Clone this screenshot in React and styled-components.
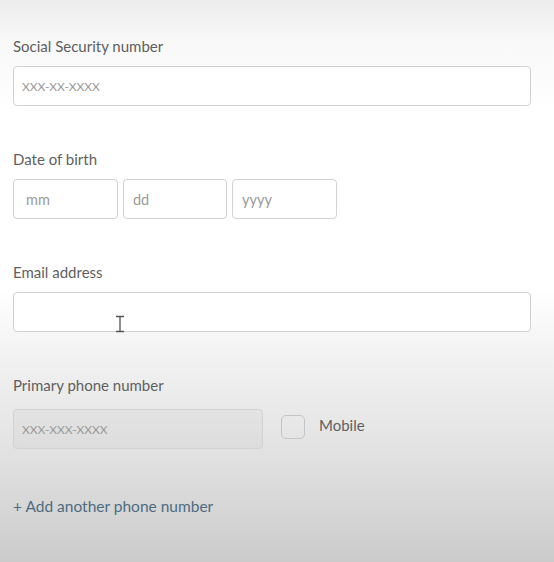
import React from "react";
import styled, { createGlobalStyle } from "styled-components";

const Global = createGlobalStyle`
  html, body { margin: 0; padding: 0; }
  body {
    width: 554px;
    height: 562px;
    overflow: hidden;
    font-family: Lato, "Open Sans", sans-serif;
    background: linear-gradient(180deg, #ececec 0px, #f8f8f8 40px, #ffffff 110px, #ffffff 290px, #f1f1f1 360px, #e6e6e6 430px, #d8d8d8 500px, #cbcbcb 562px);
  }
`;

const Page = styled.div`
  position: relative;
  display: flex;
  flex-direction: column;
  padding: 36px 0 0 13px;
  width: 554px;
  height: 562px;
  box-sizing: border-box;
`;

const Group = styled.div`
  display: flex;
  flex-direction: column;
  gap: ${(p) => p.$gap || 10}px;
  margin-bottom: ${(p) => p.$mb ?? 43}px;
`;

const Label = styled.div`
  font-size: 15px;
  line-height: 20px;
  color: #5f5f5f;
`;

const Field = styled.div`
  position: relative;
  box-sizing: border-box;
  width: ${(p) => p.$w}px;
  height: 40px;
  border: 1px solid #d2d2d2;
  border-radius: 4px;
  background: ${(p) => (p.$shade ? "rgba(0,0,0,0.025)" : "#ffffff")};
  display: flex;
  align-items: center;
  padding-left: ${(p) => p.$pl || 8}px;
  font-size: ${(p) => p.$fs || 14.5}px;
  color: #9a9a9a;
`;

const Row = styled.div`
  display: flex;
  align-items: center;
  gap: 5px;
`;

const Check = styled.div`
  box-sizing: border-box;
  width: 24px;
  height: 24px;
  border: 1px solid #c4c4c4;
  border-radius: 5px;
  margin-left: 13px;
  margin-top: -4px;
`;

const CheckText = styled.span`
  font-size: 15px;
  color: #5f5f5f;
  margin-left: 9px;
  margin-top: -8px;
`;

const AddLink = styled.a`
  font-size: 15.5px;
  line-height: 20px;
  color: #4e6c80;
  text-decoration: none;
  margin-top: 10px;
  align-self: flex-start;
`;

const Cursor = styled.svg`
  position: absolute;
  left: 100px;
  top: 22px;
`;

export default function App() {
  return (
    <>
      <Global />
      <Page>
        <Group>
          <Label>Social Security number</Label>
          <Field $w={518} $fs={12}>XXX-XX-XXXX</Field>
        </Group>
        <Group>
          <Label>Date of birth</Label>
          <Row>
            <Field $w={105} $pl={12}>mm</Field>
            <Field $w={104} $pl={9}>dd</Field>
            <Field $w={105} $pl={9}>yyyy</Field>
          </Row>
        </Group>
        <Group>
          <Label>Email address</Label>
          <Field $w={518}>
            <Cursor width="12" height="18" viewBox="0 0 12 18">
              <path d="M2 1.5h8M2 16.5h8M6 1.5v15" stroke="#555" strokeWidth="1.3" fill="none" />
            </Cursor>
          </Field>
        </Group>
        <Group $gap={14} $mb={37}>
          <Label>Primary phone number</Label>
          <Row>
            <Field $w={250} $fs={12} $shade>XXX-XXX-XXXX</Field>
            <Check />
            <CheckText>Mobile</CheckText>
          </Row>
        </Group>
        <AddLink href="#">+ Add another phone number</AddLink>
      </Page>
    </>
  );
}
